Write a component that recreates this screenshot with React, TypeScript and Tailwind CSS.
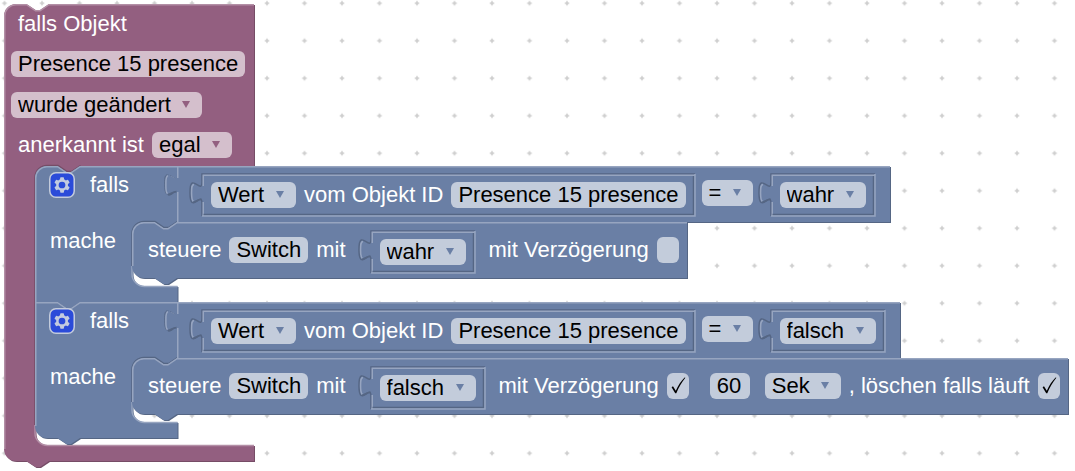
import { useLayoutEffect, useRef, useState } from "react";
import type { ReactNode, RefObject } from "react";

type Tone = { fill: string; light: string; dark: string };

const PURPLE: Tone = { fill: "#935f80", light: "#b38fa6", dark: "#764c66" };
const BLUE: Tone = { fill: "#6a7fa5", light: "#97a5c0", dark: "#556684" };

const NOTCH_RIGHT = "l9,6 h4.5 l9,-6";
const NOTCH_LEFT = "l-9,6 h-4.5 l-9,-6";
const TAB_DOWN = "c0,15 -12,-12 -12,11.25 s12,-3.75 12,11.25";
const TAB_UP = "c0,-15 -12,12 -12,-11.25 s12,3.75 12,-11.25";
const LIP = 16;

function useSize<T extends HTMLElement>(): [RefObject<T | null>, { w: number; h: number }] {
  const ref = useRef<T>(null);
  const [size, setSize] = useState({ w: 0, h: 0 });
  useLayoutEffect(() => {
    const el = ref.current;
    if (!el) return;
    const measure = () => setSize({ w: el.offsetWidth, h: el.offsetHeight });
    measure();
    const observer = new ResizeObserver(measure);
    observer.observe(el);
    return () => observer.disconnect();
  }, []);
  return [ref, size];
}

function Shape({ children }: { children: ReactNode }) {
  return (
    <svg aria-hidden="true" className="pointer-events-none absolute inset-0 -z-10 h-full w-full overflow-visible" fill="none">
      {children}
    </svg>
  );
}

function topEdge(w: number, square: boolean) {
  const corner = square ? "V0.75 H22.5" : "V12 A11.25,11.25 0 0 1 12,0.75 H22.5";
  return `${corner} ${NOTCH_RIGHT} H${w}`;
}

/* Stackable block without an inner mouth. */
function StatementBlock({ tone, children }: { tone: Tone; children: ReactNode }) {
  const [ref, { w, h }] = useSize<HTMLDivElement>();
  const body = `M0,12 A12,12 0 0 1 12,0 H22.5 ${NOTCH_RIGHT} H${w} V${h} H45 ${NOTCH_LEFT} H12 A12,12 0 0 1 0,${h - 12} Z`;
  return (
    <div ref={ref} className="relative isolate flex h-14 w-max items-center pl-4 pr-2">
      <Shape>
        <path d={body} fill={tone.dark} transform="translate(1 1)" />
        <path d={body} fill={tone.fill} />
        <path d={`M0.75,${h - 12} ${topEdge(w, false)}`} stroke={tone.light} strokeWidth="1.5" />
      </Shape>
      {children}
    </div>
  );
}

/* C-shaped outline whose mouth holds a stack of statements. */
function MouthShape({
  tone, w, h, mouthX, mouthTop, socket = false, squareTop = false, squareBottom = false,
}: {
  tone: Tone; w: number; h: number; mouthX: number; mouthTop: number;
  socket?: boolean; squareTop?: boolean; squareBottom?: boolean;
}) {
  const mouthBottom = h - LIP;
  const start = squareTop ? "M0,0" : "M0,12 A12,12 0 0 1 12,0";
  const end = squareBottom ? `H0 Z` : `H12 A12,12 0 0 1 0,${h - 12} Z`;
  const side = socket ? `V7.5 ${TAB_DOWN} V${mouthTop}` : `V${mouthTop}`;
  const body = `${start} H22.5 ${NOTCH_RIGHT} H${w} ${side} H${mouthX + 45} ${NOTCH_LEFT} H${mouthX + 12} a12,12 0 0 0 -12,12 V${mouthBottom - 12} a12,12 0 0 0 12,12 H${w} V${h} H45 ${NOTCH_LEFT} ${end}`;
  return (
    <Shape>
      <path d={body} fill={tone.dark} transform="translate(1 1)" />
      <path d={body} fill={tone.fill} />
      <path d={`M${mouthX + 45},${mouthTop - 0.5} ${NOTCH_LEFT} H${mouthX + 12} a12,12 0 0 0 -12.5,12 V${mouthBottom - 20}`} stroke={tone.dark} strokeWidth="1.5" />
      <path d={`M0.75,${squareBottom ? h : h - 12} ${topEdge(w, squareTop)}`} stroke={tone.light} strokeWidth="1.5" />
      <path d={`M${mouthX - 0.5},${mouthBottom - 20} v8 a12.5,12.5 0 0 0 12.5,12.5 H${w}`} stroke={tone.light} strokeWidth="1.5" />
    </Shape>
  );
}

/* Value block plugged in from the right of its parent. */
function OuterValueBlock({ children }: { children: ReactNode }) {
  const [ref, { w, h }] = useSize<HTMLDivElement>();
  const body = `M0,0 H${w} V${h} H0 V30 ${TAB_UP} Z`;
  return (
    <div ref={ref} className="relative isolate flex h-14 w-max items-center pb-[2px] pl-[25px] pr-[15px]">
      <Shape>
        <path d={body} fill={BLUE.dark} transform="translate(1 1)" />
        <path d={body} fill={BLUE.fill} />
        <path d="M-9,28.6 C-6,28 -3.5,25.2 -0.5,25.4" stroke={BLUE.dark} strokeWidth="1.5" />
        <path d="M-9.5,8.8 C-12.8,9 -12.2,14 -12.2,18.75 C-12.2,22 -12.2,27 -10,28.4" stroke={BLUE.dark} strokeWidth="1" />
        <path
          d={`M0.75,${h} V26 M-9.5,27.6 C-11.4,26 -11.1,22 -11.1,18.75 C-11.1,14 -11.4,10.5 -9,9.8 M0.75,12 V0.75 H${w}`}
          stroke={BLUE.light}
          strokeWidth="1.5"
        />
      </Shape>
      {children}
    </div>
  );
}

/* Value block sitting inside an inline socket. */
function InlineValueBlock({ children }: { children: ReactNode }) {
  const [ref, { w, h }] = useSize<HTMLDivElement>();
  const near = `M0,${h} V30 ${TAB_UP} V0 H${w}`;
  return (
    <div ref={ref} className="relative isolate mt-[3px] flex h-[42px] w-max items-center gap-2 px-[9px]">
      <Shape>
        <path d={near} stroke={BLUE.dark} strokeWidth="1.5" />
        <path
          d={`M1.25,${h} V28 M-8.5,27.6 C-10.6,26 -10.4,22 -10.4,18.75 C-10.4,14 -10.6,11 -8,10.6 M1.25,12 V1.25 H${w}`}
          stroke={BLUE.light}
          strokeWidth="1.5"
        />
        <path d="M-9,28.4 C-6,28 -3.5,25 -0.5,25.4" stroke={BLUE.dark} strokeWidth="2" />
        <path d={`M${w - 1.5},2 V${h - 1.5} H1.5`} stroke={BLUE.dark} strokeWidth="1.5" />
        <path d={`M${w},0 V${h} H0`} stroke={BLUE.light} strokeWidth="1.5" />
      </Shape>
      {children}
    </div>
  );
}

function Label({ children }: { children: ReactNode }) {
  return <span className="text-white">{children}</span>;
}

function FieldButton({ children }: { children: ReactNode }) {
  return (
    <button type="button" className="h-[26px] cursor-pointer rounded-md bg-white/60 px-[7px] text-black">
      {children}
    </button>
  );
}

function Dropdown({ value, label, tone = BLUE }: { value: string; label: string; tone?: Tone }) {
  return (
    <span className="relative flex">
      <select
        aria-label={label}
        defaultValue={value}
        className="h-[26px] cursor-pointer appearance-none rounded-md bg-white/60 pl-[7px] pr-[31px] text-black"
      >
        <option value={value}>{value}</option>
      </select>
      <svg aria-hidden="true" viewBox="0 0 8 7" className="pointer-events-none absolute right-3 top-[9px] h-[7px] w-2">
        <path d="M0,0 H8 L4,7 Z" fill={tone.fill} />
      </svg>
    </span>
  );
}

function CheckField({ label, checked = false }: { label: string; checked?: boolean }) {
  return (
    <span className="relative flex">
      <input
        type="checkbox"
        aria-label={label}
        defaultChecked={checked}
        className="peer h-[26px] w-[22px] cursor-pointer appearance-none rounded-md bg-white/60"
      />
      <svg
        aria-hidden="true"
        viewBox="0 0 16 18"
        className="pointer-events-none absolute left-1 top-1 hidden h-[18px] w-4 peer-checked:block"
      >
        <path d="M0.6,10.2 L2,9.2 L4.8,13.8 C7,8.6 10.4,3.4 13.6,0.4 L14.4,0.8 C10.8,5.2 7.6,10.6 5.3,16.2 L4.2,16.2 Z" fill="#000" />
      </svg>
    </span>
  );
}

function GearButton() {
  return (
    <button type="button" aria-label="Block anpassen" className="cursor-pointer">
      <svg viewBox="-0.5 -0.5 17 17" className="h-[26px] w-[26px]">
        <rect width="16" height="16" rx="4" fill="#2b4bd9" stroke="#c3cbdb" />
        <path
          fill="#c3cbdf"
          d="m4.203,7.296 0,1.368 -0.92,0.677 -0.11,0.41 0.9,1.559 0.41,0.11 1.043,-0.457 1.187,0.683 0.127,1.134 0.3,0.3 1.8,0 0.3,-0.299 0.127,-1.138 1.185,-0.682 1.046,0.458 0.409,-0.11 0.9,-1.559 -0.11,-0.41 -0.92,-0.677 0,-1.366 0.92,-0.677 0.11,-0.41 -0.9,-1.559 -0.409,-0.109 -1.046,0.458 -1.185,-0.682 -0.127,-1.138 -0.3,-0.299 -1.8,0 -0.3,0.3 -0.126,1.135 -1.187,0.682 -1.043,-0.457 -0.41,0.11 -0.899,1.559 0.108,0.409z"
        />
        <circle cx="8" cy="8" r="2.2" fill="#2b4bd9" />
      </svg>
    </button>
  );
}

function IfBlock({
  expected, last = false, children,
}: {
  expected: string; last?: boolean; children: ReactNode;
}) {
  const [ref, { h }] = useSize<HTMLDivElement>();
  return (
    <div ref={ref} className="relative isolate w-max pb-4">
      <MouthShape tone={BLUE} w={142.5} h={h} mouthX={97.5} mouthTop={56} socket squareTop={last} squareBottom={!last} />
      <div className="flex">
        <div className="flex h-[38px] w-[142px] items-center gap-[15px] pl-[14px]">
          <GearButton />
          <Label>falls</Label>
        </div>
        <OuterValueBlock>
          <InlineValueBlock>
            <Dropdown value="Wert" label="Attribut" />
            <Label>vom Objekt ID</Label>
            <FieldButton>Presence 15 presence</FieldButton>
          </InlineValueBlock>
          <div className="pl-[7px] pr-[18px]">
            <Dropdown value="=" label="Vergleich" />
          </div>
          <InlineValueBlock>
            <Dropdown value={expected} label="Vergleichswert" />
          </InlineValueBlock>
        </OuterValueBlock>
      </div>
      <div className="flex pb-2">
        <div className="flex h-[38px] w-[97px] items-center pl-[15px]">
          <Label>mache</Label>
        </div>
        {children}
      </div>
    </div>
  );
}

function ControlBlock({ value, delayed = false, children }: { value: string; delayed?: boolean; children?: ReactNode }) {
  return (
    <StatementBlock tone={BLUE}>
      <div className="flex items-center gap-2">
        <Label>steuere</Label>
        <FieldButton>Switch</FieldButton>
        <Label>mit</Label>
      </div>
      <div className="pl-[25px] pr-[14px]">
        <InlineValueBlock>
          <Dropdown value={value} label="Zielwert" />
        </InlineValueBlock>
      </div>
      <div className="flex items-center gap-2">
        <Label>mit Verzögerung</Label>
        <CheckField label="mit Verzögerung" checked={delayed} />
      </div>
      {children}
    </StatementBlock>
  );
}

function Grid() {
  return (
    <svg aria-hidden="true" className="pointer-events-none absolute inset-0 -z-10 h-full w-full">
      <defs>
        <pattern id="grid" width="37.5" height="37.5" x="-14.25" y="-15.5" patternUnits="userSpaceOnUse">
          <path d="M16.5,18.75 H21 M18.75,16.5 V21" stroke="#ccc" strokeWidth="1.5" />
        </pattern>
      </defs>
      <rect width="100%" height="100%" fill="url(#grid)" />
    </svg>
  );
}

function TriggerBlock({ children }: { children: ReactNode }) {
  const [ref, { h }] = useSize<HTMLDivElement>();
  const [headRef, head] = useSize<HTMLDivElement>();
  return (
    <div ref={ref} className="relative isolate w-max pb-4">
      <MouthShape tone={PURPLE} w={head.w} h={h} mouthX={31.5} mouthTop={head.h} />
      <div ref={headRef} className="flex h-[162px] w-max flex-col items-start justify-around pl-[7px] pr-[9px] pb-px">
        <div className="pl-[7px]">
          <Label>falls Objekt</Label>
        </div>
        <FieldButton>Presence 15 presence</FieldButton>
        <Dropdown value="wurde geändert" label="Auslöser" tone={PURPLE} />
        <div className="flex items-center gap-2 pl-[7px]">
          <Label>anerkannt ist</Label>
          <Dropdown value="egal" label="anerkannt ist" tone={PURPLE} />
        </div>
      </div>
      <div className="pb-[7px] pl-[31px]">{children}</div>
    </div>
  );
}

export default function App() {
  return (
    <main className="relative isolate min-h-screen overflow-hidden whitespace-nowrap bg-white p-1 font-['Liberation_Sans',Arial,sans-serif] text-[22px] leading-[26px]">
      <Grid />
      <TriggerBlock>
        <IfBlock expected="wahr">
          <ControlBlock value="wahr" />
        </IfBlock>
        <IfBlock expected="falsch" last>
          <ControlBlock value="falsch" delayed>
            <div className="flex items-center gap-[15px] pl-[21px]">
              <input
                type="text"
                aria-label="Verzögerung"
                defaultValue="60"
                className="h-[26px] w-10 rounded-md bg-white/60 px-[7px] text-black"
              />
              <Dropdown value="Sek" label="Einheit" />
            </div>
            <div className="flex items-center gap-2 pl-2">
              <Label>, löschen falls läuft</Label>
              <CheckField label="löschen falls läuft" checked />
            </div>
          </ControlBlock>
        </IfBlock>
      </TriggerBlock>
    </main>
  );
}
